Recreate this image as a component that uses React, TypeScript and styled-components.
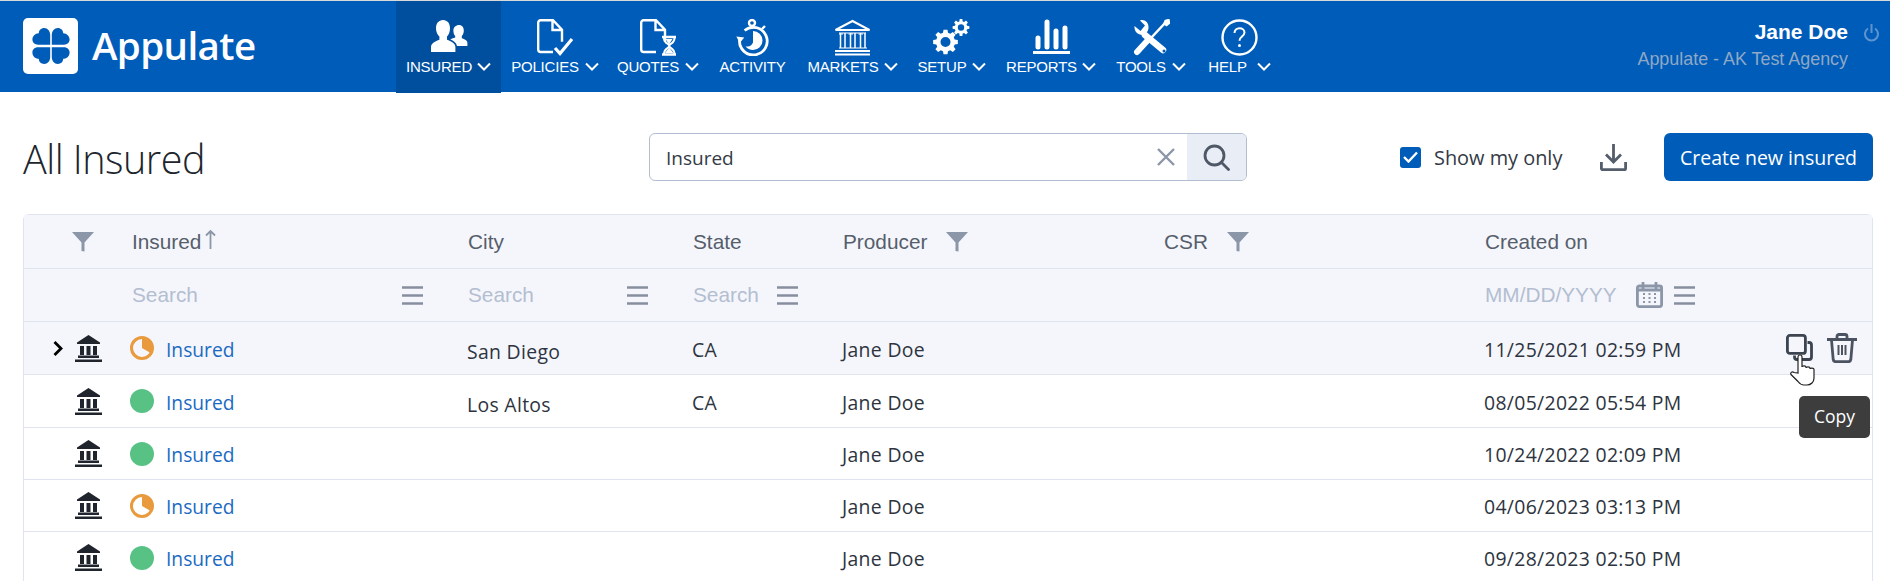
import React from 'react';
import styled, { createGlobalStyle } from 'styled-components';

const GlobalStyle = createGlobalStyle`
    html, body {
        margin: 0;
        padding: 0;
        background: #fff;
        overflow: hidden;
        font-family: "Open Sans", "Liberation Sans", sans-serif;
    }
    * { box-sizing: border-box; }
`

// Header
const Page = styled.div`
    width: 1890px;
    height: 581px;
    border-top: 1px solid #d9d9d9;
    overflow: hidden;
`

const Header = styled.header`
    display: flex;
    height: 91px;
    background: #005cb9;
    color: #fff;
`

const Brand = styled.div`
    display: flex;
    align-items: center;
    gap: 14px;
    width: 396px;
    padding: 0 0 2px 23px;
`

const LogoBox = styled.div`
    display: flex;
    align-items: center;
    justify-content: center;
    width: 55px;
    height: 56px;
    background: #fff;
    border-radius: 5px;
`

const BrandName = styled.div`
    font-size: 38.5px;
    font-weight: 600;
    line-height: 1;
    letter-spacing: -0.6px;
`

const Nav = styled.nav`
    display: flex;
    align-items: stretch;
`

const NavItem = styled.div<{ $active?: boolean; $w: number }>`
    display: flex;
    flex-direction: column;
    align-items: center;
    width: ${(p) => p.$w}px;
    height: ${(p) => (p.$active ? '92px' : '91px')};
    padding-top: 18px;
    background: ${(p) => (p.$active ? '#004f9f' : 'transparent')};
`

const NavIconBox = styled.div`
    height: 37px;
    margin-bottom: 2px;
    line-height: 0;
`

const NavLabel = styled.div<{ $gap: number }>`
    display: flex;
    align-items: center;
    gap: ${(p) => p.$gap}px;
    font-family: "Liberation Sans", Arial, sans-serif;
    font-size: 15px;
    line-height: 17px;
    letter-spacing: -0.2px;
    white-space: nowrap;
`

const UserBlock = styled.div`
    display: flex;
    margin-left: auto;
    padding: 19px 11px 0 0;
    gap: 16px;
`

const UserText = styled.div`
    text-align: right;
    font-family: "Liberation Sans", Arial, sans-serif;
`

const UserName = styled.div`
    font-size: 21px;
    font-weight: bold;
    line-height: 24px;
`

const UserAgency = styled.div`
    margin-top: 4px;
    font-size: 17.9px;
    line-height: 22px;
    color: #8fa8c6;
`

const PowerWrap = styled.div`
    padding-top: 4px;
    line-height: 0;
`

// Toolbar
const Toolbar = styled.div`
    display: flex;
    align-items: center;
    height: 48px;
    margin: 41px 17px 0 23px;
`

const Title = styled.h1`
    width: 626px;
    margin: 0;
    padding-top: 3px;
    font-size: 39.5px;
    font-weight: 300;
    line-height: 48px;
    letter-spacing: -0.5px;
    color: #20252d;
`

const SearchBox = styled.div`
    display: flex;
    width: 598px;
    height: 48px;
    border: 1.5px solid #b3bdd0;
    border-radius: 6px;
    overflow: hidden;
`

const SearchField = styled.div`
    display: flex;
    flex: 1;
    align-items: center;
    justify-content: space-between;
    padding: 0 12px 0 16px;
    font-size: 19px;
    color: #333a45;
`

const SearchValue = styled.span`
    padding-top: 2px;
`

const SearchButton = styled.div`
    display: flex;
    align-items: center;
    justify-content: center;
    width: 59px;
    background: #e9edf5;
`

const ToolbarRight = styled.div`
    display: flex;
    align-items: center;
    margin-left: auto;
`

const CheckBox = styled.div`
    display: flex;
    align-items: center;
    justify-content: center;
    width: 21px;
    height: 21px;
    margin-right: 13px;
    background: #005cb9;
    border-radius: 3px;
`

const CheckLabel = styled.span`
    width: 166px;
    padding-top: 1px;
    font-size: 19.9px;
    color: #333a45;
    white-space: nowrap;
`

const DownloadWrap = styled.div`
    width: 64px;
    line-height: 0;
`

const CreateButton = styled.button`
    width: 209px;
    height: 48px;
    padding: 1px 0 0;
    border: 0;
    border-radius: 6px;
    background: #005cb9;
    color: #fff;
    font-family: inherit;
    font-size: 19.5px;
`

// Table
const Table = styled.div`
    margin: 33px 17px 0 23px;
    border: 1px solid #dfe4ef;
    border-bottom: 0;
    border-radius: 6px 6px 0 0;
`

const columns = '108px 336px 225px 150px 321px 321px 1fr';

const Row = styled.div<{ $shaded?: boolean; $h: number }>`
    display: grid;
    grid-template-columns: ${columns};
    align-items: center;
    height: ${(p) => p.$h}px;
    border-bottom: 1px solid #dfe4ef;
    background: ${(p) => (p.$shaded ? '#f5f6fb' : '#fff')};
`

const HeadCell = styled.div`
    display: flex;
    align-items: center;
    gap: 4px;
    font-family: "Liberation Sans", Arial, sans-serif;
    font-size: 20.8px;
    color: #565e6c;
`

const FilterCell = styled(HeadCell)<{ $pad?: number }>`
    gap: 19px;
    padding-left: ${(p) => p.$pad ?? 0}px;
`

const SortWrap = styled.span`
    margin-top: -5px;
    line-height: 0;
`

const Placeholder = styled.span<{ $w: number }>`
    display: inline-block;
    width: ${(p) => p.$w}px;
    font-family: "Liberation Sans", Arial, sans-serif;
    font-size: 20.8px;
    line-height: 24px;
    color: #b3bed1;
    white-space: nowrap;
`

const SearchCell = styled.div<{ $gap?: number }>`
    display: flex;
    align-items: center;
    gap: ${(p) => p.$gap ?? 0}px;
    line-height: 0;
`

const IconCell = styled.div`
    display: flex;
    align-items: center;
    padding-left: 29px;
`

const ExpandSlot = styled.span`
    display: flex;
    width: 22px;
    justify-content: flex-start;
    line-height: 0;
`

const NameCell = styled.div`
    display: flex;
    align-items: center;
    gap: 12px;
    margin-left: -2px;
`

const InsuredLink = styled.a`
    padding-top: 2px;
    font-size: 19.2px;
    color: #1a6ac2;
    text-decoration: none;
`

const Cell = styled.div<{ $drop?: number }>`
    position: relative;
    top: ${(p) => p.$drop ?? 1}px;
    margin-left: -1px;
    font-size: 19.4px;
    letter-spacing: 0.32px;
    color: #2d3440;
    white-space: nowrap;
`

const ActionsCell = styled.div`
    position: relative;
    display: flex;
    align-items: center;
    justify-content: space-between;
    padding-right: 15px;
`

const ActionIcons = styled.div`
    display: flex;
    align-items: center;
    gap: 14px;
    line-height: 0;
`

const HandCursor = styled.div`
    position: absolute;
    top: 21px;
    right: 56px;
    line-height: 0;
`

const Tooltip = styled.div`
    position: absolute;
    top: 63px;
    right: 2px;
    width: 71px;
    height: 42px;
    border-radius: 5px;
    background: #3d3d3d;
    color: #fff;
    font-size: 17.5px;
    line-height: 41px;
    text-align: center;
`

// Icons
const NavSvg = (props: { children: React.ReactNode; w?: number }) => (
    <svg width={props.w ?? 37} height={37} viewBox={`0 0 ${props.w ?? 37} 37`} fill="none" stroke="#fff" strokeWidth="2.4">
        {props.children}
    </svg>
)

const Clover = () => (
    <svg width="38" height="40" viewBox="0 0 38 40" fill="#005cb9">
        <path d="M18.2 18.8V9c0-4-2.6-7-6-7-3.2 0-5.4 2.4-5.4 5.2C3 7.4.4 10.2.4 13.6c0 3 2.4 5.2 5.6 5.2z" />
        <path d="M19.8 18.8V9c0-4 2.6-7 6-7 3.2 0 5.4 2.4 5.4 5.2 3.8.2 6.4 3 6.4 6.4 0 3-2.4 5.2-5.6 5.2z" />
        <path d="M18.2 21.2V31c0 4-2.6 7-6 7-3.2 0-5.4-2.4-5.4-5.2-3.8-.2-6.4-3-6.4-6.4 0-3 2.4-5.2 5.6-5.2z" />
        <path d="M19.8 21.2V31c0 4 2.6 7 6 7 3.2 0 5.4-2.4 5.4-5.2 3.8-.2 6.4-3 6.4-6.4 0-3-2.4-5.2-5.6-5.2z" />
    </svg>
)

const UsersIcon = () => (
    <svg width="38" height="34" viewBox="0 0 38 34" fill="#fff">
        <path d="M13 1c4.6 0 7 3.6 7 8.2 0 3.4-1.2 6.4-3 8.3v3.2c4 1.4 8.4 3.4 8.4 7.3V33H1v-5c0-3.9 4.4-5.9 8.4-7.300v-3.200C7.400 15.600 6 12.600 6 9.200 6 4.600 8.600 1 13 1z" />
        <path d="M29 6c3 0 4.800 2.400 4.800 5.400 0 2.300-.8 4.300-2 5.600v2.200c2.600.9 5.600 2.100 5.600 4.500v3.300H27c-.6-3.200-3.400-5.300-6.800-6.700.8-.7 3-1.100 5-1.900V17c-1.200-1.300-1.800-3.300-1.800-5.600C23.400 8.400 26 6 29 6z" />
    </svg>
)

const DocOutline = () => (
    <path d="M16 33H3.700A2.500 2.500 0 0 1 1.200 30.500V3.700A2.500 2.500 0 0 1 3.700 1.200h12.300l9 9.500v12M15.500 1.500v9.500h9" />
)

const PolicyIcon = () => (
    <NavSvg>
        <DocOutline />
        <path d="M18 29l5 5.500 12-14.500" strokeWidth="3.200" />
    </NavSvg>
)

const QuoteIcon = () => (
    <NavSvg>
        <DocOutline />
        <path d="M22 18h14M22 35.500h14" strokeWidth="2.600" />
        <path d="M24 19c0 6 5.500 5.500 5.500 7.800S24 29 24 35M34.500 19c0 6-5.500 5.500-5.500 7.800s5.500 2.200 5.500 8.200" strokeWidth="2" />
        <path d="M25.500 20h7l-3.500 5.500zM25 34l4.200-5.500 4.200 5.500z" fill="#fff" stroke="none" />
    </NavSvg>
)

const ActivityIcon = () => (
    <NavSvg w={33}>
        <circle cx="16" cy="4" r="3" />
        <path d="M16 7v3M26 10l3-3" />
        <path d="M3.600 21a13.800 13.800 0 1 0 5-9.500" strokeWidth="2.800" />
        <path d="M0 18h8l-4 6z" fill="#fff" stroke="none" transform="rotate(6 4 21)" />
        <path d="M17 12a9.500 9.500 0 0 1 0 19 9.500 9.500 0 0 1-7.500-3.800c3.600 1 6-.4 7.500-3.700z" fill="#fff" stroke="none" />
    </NavSvg>
)

const MarketsIcon = () => (
    <NavSvg>
        <path d="M1.500 11L18.500 2l17 9z" strokeWidth="2" />
        <path d="M5 14h27" strokeWidth="1" />
        <path d="M6.500 14v15M11 14v15M16.500 14v15M21 14v15M26.500 14v15M31 14v15" strokeWidth="1.500" />
        <path d="M5 15h4M14.500 15h4.500M24.500 15h4.500M5 29h28" strokeWidth="1" />
        <path d="M1 32h35M1 35.500h35" strokeWidth="1.800" />
    </NavSvg>
)

// gear outline built from its tooth count, with a round hole in the middle
const gearPath = (cx: number, cy: number, ro: number, ri: number, hole: number, teeth: number) => {
    const step = (Math.PI * 2) / teeth
    const pts: string[] = []
    for (let i = 0; i < teeth; i++) {
        const a = i * step
        const corners: [number, number][] = [
            [ri, a - step * 0.34],
            [ro, a - step * 0.2],
            [ro, a + step * 0.2],
            [ri, a + step * 0.34],
        ]
        corners.forEach(([r, t]) => pts.push(`${(cx + r * Math.sin(t)).toFixed(2)} ${(cy - r * Math.cos(t)).toFixed(2)}`))
    }
    const circle = `M${cx - hole} ${cy}a${hole} ${hole} 0 1 0 ${hole * 2} 0a${hole} ${hole} 0 1 0 ${-hole * 2} 0z`
    return `M${pts.join('L')}z${circle}`
}

const SetupIcon = () => (
    <NavSvg>
        <path d={gearPath(12.5, 23, 12.5, 9.5, 5, 8)} fill="#fff" fillRule="evenodd" stroke="none" />
        <path d={gearPath(28, 8.5, 8.5, 6.3, 3.2, 8)} fill="#fff" fillRule="evenodd" stroke="none" />
    </NavSvg>
)

const ReportsIcon = () => (
    <NavSvg>
        <path d="M5 19v9M14 3v25M23 12v16M32 9v19" strokeWidth="5" strokeLinecap="round" />
        <path d="M0 33.500h37" strokeWidth="3" />
    </NavSvg>
)

const ToolsIcon = () => (
    <NavSvg>
        <path d="M33 3L18 19" strokeWidth="2.500" />
        <path d="M35.500 1l-3 1-1 2.500 2 1.500 2.500-2z" fill="#fff" />
        <path d="M15 21L4 33" strokeWidth="6" strokeLinecap="round" />
        <path d="M12 16L30 31" strokeWidth="6.500" strokeLinecap="round" />
        <path d="M1.500 7l6 5 4.500-5.500L7 1.500C11 0 16 3 15.500 9c-.2 2-1 3.500-2 4.500L10.500 16C5 16.500 1 12.500 1.500 7z" fill="#fff" stroke="none" />
        <circle cx="31" cy="32" r="1.500" fill="#005cb9" stroke="none" />
    </NavSvg>
)

const HelpIcon = () => (
    <NavSvg>
        <circle cx="18.500" cy="18.500" r="17" strokeWidth="2.400" />
        <path d="M13.500 14c0-3 2.200-4.800 5-4.800s5 1.800 5 4.400c0 2.200-1.400 3.200-3 4.400-1.400 1-2 1.900-2 3.800" strokeWidth="2" />
        <circle cx="18.500" cy="26.500" r="1.500" fill="#fff" stroke="none" />
    </NavSvg>
)

const Chevron = () => (
    <svg width="14" height="9" viewBox="0 0 14 9" fill="none" stroke="#fff" strokeWidth="2">
        <path d="M1 1.500l6 6 6-6" />
    </svg>
)

const PowerIcon = () => (
    <svg width="15" height="18" viewBox="0 0 15 18" fill="none" stroke="#5d93cf" strokeWidth="2">
        <path d="M7.500 0v9M4 4.500a6.500 6.500 0 1 0 7 0" />
    </svg>
)

const ClearIcon = () => (
    <svg width="18" height="18" viewBox="0 0 18 18" stroke="#8b96a8" strokeWidth="2.400">
        <path d="M1 1l16 16M17 1L1 17" />
    </svg>
)

const MagnifierIcon = () => (
    <svg width="27" height="27" viewBox="0 0 27 27" fill="none" stroke="#4f5866" strokeWidth="2.800">
        <circle cx="11.500" cy="11.500" r="9.500" />
        <path d="M18.500 18.500l7 7" strokeLinecap="round" />
    </svg>
)

const CheckMark = () => (
    <svg width="15" height="12" viewBox="0 0 15 12" fill="none" stroke="#fff" strokeWidth="2.400">
        <path d="M1 6l4.500 4.500L14 1.500" />
    </svg>
)

const DownloadIcon = () => (
    <svg width="27" height="27" viewBox="0 0 27 27" fill="none" stroke="#545d6c" strokeWidth="2.800">
        <path d="M13.500 0v17M6 10.500l7.500 7.500 7.500-7.500" />
        <path d="M1.400 18v6.500a1.200 1.200 0 0 0 1.200 1.200h21.800a1.200 1.200 0 0 0 1.200-1.200V18" />
    </svg>
)

const FunnelIcon = () => (
    <svg width="22" height="20" viewBox="0 0 22 20" fill="#8b96a8">
        <path d="M0 0h22l-9.500 10.500V19.500l-3-.5v-8.500z" />
    </svg>
)

const SortIcon = () => (
    <svg width="11" height="19" viewBox="0 0 11 19" fill="none" stroke="#8b96a8" strokeWidth="1.800">
        <path d="M5.500 19V1M1 5.500L5.500 1 10 5.500" />
    </svg>
)

const MenuIcon = () => (
    <svg width="21" height="19" viewBox="0 0 21 19" stroke="#868f9e" strokeWidth="2.400">
        <path d="M0 1.500h21M0 9.500h21M0 17.500h21" />
    </svg>
)

const CalendarIcon = () => (
    <svg width="27" height="26" viewBox="0 0 27 26" fill="none" stroke="#8b96a8" strokeWidth="2.800">
        <rect x="1.400" y="4" width="24.200" height="20.600" rx="2" />
        <path d="M7 0v7M20 0v7M1 8h25" />
        <path d="M7 12h2M12.500 12h2M18 12h2M7 16h2M12.500 16h2M18 16h2M7 20h2M12.500 20h2M18 20h2" strokeWidth="1.800" />
    </svg>
)

const RowChevron = () => (
    <svg width="10" height="15" viewBox="0 0 10 15" fill="none" stroke="#000" strokeWidth="2.800">
        <path d="M1.500 1l6.500 6.500L1.500 14" />
    </svg>
)

const BankIcon = () => (
    <svg width="27" height="27" viewBox="0 0 27 27" fill="#20252d">
        <path d="M13.500 0L25 7.500v1.500H2V7.500z" />
        <path d="M5 11h4v9H5zM11.500 11h4v9h-4zM18 11h4v9h-4zM3 20.500h21v2.500H3z" />
        <path d="M0 24.500h27V27H0z" />
    </svg>
)

const StatusIcon = (props: { partial?: boolean }) => props.partial ? (
    <svg width="24" height="24" viewBox="0 0 24 24">
        <circle cx="12" cy="12" r="10.500" fill="none" stroke="#e99a3d" strokeWidth="3" />
        <path d="M12 12V1a11 11 0 0 1 9.500 16.500z" fill="#e99a3d" />
    </svg>
) : (
    <svg width="24" height="24" viewBox="0 0 24 24">
        <circle cx="12" cy="12" r="12" fill="#58c285" />
    </svg>
)

const CopyIcon = () => (
    <svg width="27" height="28" viewBox="0 0 27 28" fill="none" stroke="#3c4450" strokeWidth="2.800">
        <rect x="1.400" y="1.400" width="18" height="18" rx="2.500" />
        <path d="M21.500 8.500h1.500a2.500 2.500 0 0 1 2.500 2.500v12a2.500 2.500 0 0 1-2.500 2.500H11a2.500 2.500 0 0 1-2.500-2.500v-1.500" />
    </svg>
)

const TrashIcon = () => (
    <svg width="30" height="30" viewBox="0 0 30 30" fill="none" stroke="#4b5361" strokeWidth="2.800">
        <path d="M0 6.500h30M10 6V3.500A2 2 0 0 1 12 1.500h6a2 2 0 0 1 2 2V6" />
        <path d="M4.500 7l1.700 19.500a2.500 2.500 0 0 0 2.500 2.200h12.600a2.500 2.500 0 0 0 2.500-2.200L25.500 7" />
        <path d="M11.500 12v10M15 12v10M18.500 12v10" strokeWidth="2" />
    </svg>
)

const HandIcon = () => (
    <svg width="26" height="32" viewBox="0 0 26 32" fill="#fff" stroke="#222" strokeWidth="1.200">
        <path d="M8 19V3a2 2 0 0 1 4 0v10c0-1.500 4-1.500 4 0v1c0-1.500 4-1.500 4 0v1c0-1.200 4-1.200 4 .5V24c0 4-3 7-7 7h-3c-3 0-4.500-1.500-6-3.500L1 20.500c-1-1.500 1-3.500 3-2z" />
    </svg>
)

// Data
const navItems = [
    { label: 'INSURED', icon: <UsersIcon />, w: 105, active: true, gap: 5 },
    { label: 'POLICIES', icon: <PolicyIcon />, w: 108, gap: 6 },
    { label: 'QUOTES', icon: <QuoteIcon />, w: 98, gap: 6 },
    { label: 'ACTIVITY', icon: <ActivityIcon />, w: 91, nochevron: true },
    { label: 'MARKETS', icon: <MarketsIcon />, w: 109, gap: 5 },
    { label: 'SETUP', icon: <SetupIcon />, w: 89, gap: 5 },
    { label: 'REPORTS', icon: <ReportsIcon />, w: 110, gap: 5 },
    { label: 'TOOLS', icon: <ToolsIcon />, w: 90, gap: 6 },
    { label: 'HELP', icon: <HelpIcon />, w: 87, gap: 10 },
]

const rows = [
    { partial: true, city: 'San Diego', state: 'CA', created: '11/25/2021 02:59 PM', h: 53, hover: true },
    { partial: false, city: 'Los Altos', state: 'CA', created: '08/05/2022 05:54 PM', h: 53 },
    { partial: false, city: '', state: '', created: '10/24/2022 02:09 PM', h: 52 },
    { partial: true, city: '', state: '', created: '04/06/2023 03:13 PM', h: 52 },
    { partial: false, city: '', state: '', created: '09/28/2023 02:50 PM', h: 52 },
]

export default function App() {
    return (
        <Page>
            <GlobalStyle />
            <Header>
                <Brand>
                    <LogoBox><Clover /></LogoBox>
                    <BrandName>Appulate</BrandName>
                </Brand>
                <Nav>
                    {navItems.map((item) => (
                        <NavItem key={item.label} $w={item.w} $active={item.active}>
                            <NavIconBox>{item.icon}</NavIconBox>
                            <NavLabel $gap={item.gap ?? 0}>
                                {item.label}
                                {!item.nochevron && <Chevron />}
                            </NavLabel>
                        </NavItem>
                    ))}
                </Nav>
                <UserBlock>
                    <UserText>
                        <UserName>Jane Doe</UserName>
                        <UserAgency>Appulate - AK Test Agency</UserAgency>
                    </UserText>
                    <PowerWrap><PowerIcon /></PowerWrap>
                </UserBlock>
            </Header>

            <Toolbar>
                <Title>All Insured</Title>
                <SearchBox>
                    <SearchField>
                        <SearchValue>Insured</SearchValue>
                        <ClearIcon />
                    </SearchField>
                    <SearchButton><MagnifierIcon /></SearchButton>
                </SearchBox>
                <ToolbarRight>
                    <CheckBox><CheckMark /></CheckBox>
                    <CheckLabel>Show my only</CheckLabel>
                    <DownloadWrap><DownloadIcon /></DownloadWrap>
                    <CreateButton>Create new insured</CreateButton>
                </ToolbarRight>
            </Toolbar>

            <Table>
                <Row $shaded $h={54}>
                    <FilterCell $pad={48}><FunnelIcon /></FilterCell>
                    <HeadCell>Insured <SortWrap><SortIcon /></SortWrap></HeadCell>
                    <HeadCell>City</HeadCell>
                    <HeadCell>State</HeadCell>
                    <FilterCell>Producer <FunnelIcon /></FilterCell>
                    <FilterCell>CSR <FunnelIcon /></FilterCell>
                    <HeadCell>Created on</HeadCell>
                </Row>
                <Row $shaded $h={53}>
                    <div />
                    <SearchCell><Placeholder $w={270}>Search</Placeholder><MenuIcon /></SearchCell>
                    <SearchCell><Placeholder $w={159}>Search</Placeholder><MenuIcon /></SearchCell>
                    <SearchCell><Placeholder $w={84}>Search</Placeholder><MenuIcon /></SearchCell>
                    <div />
                    <div />
                    <SearchCell $gap={11}>
                        <Placeholder $w={140}>MM/DD/YYYY</Placeholder>
                        <CalendarIcon />
                        <MenuIcon />
                    </SearchCell>
                </Row>
                {rows.map((row) => (
                    <Row key={row.created} $shaded={row.hover} $h={row.h}>
                        <IconCell>
                            <ExpandSlot>{row.hover && <RowChevron />}</ExpandSlot>
                            <BankIcon />
                        </IconCell>
                        <NameCell>
                            <StatusIcon partial={row.partial} />
                            <InsuredLink>Insured</InsuredLink>
                        </NameCell>
                        <Cell $drop={3}>{row.city}</Cell>
                        <Cell>{row.state}</Cell>
                        <Cell>Jane Doe</Cell>
                        <Cell />
                        <ActionsCell>
                            <Cell>{row.created}</Cell>
                            {row.hover && (
                                <ActionIcons>
                                    <CopyIcon />
                                    <TrashIcon />
                                </ActionIcons>
                            )}
                            {row.hover && <HandCursor><HandIcon /></HandCursor>}
                            {row.hover && <Tooltip>Copy</Tooltip>}
                        </ActionsCell>
                    </Row>
                ))}
            </Table>
        </Page>
    )
}
